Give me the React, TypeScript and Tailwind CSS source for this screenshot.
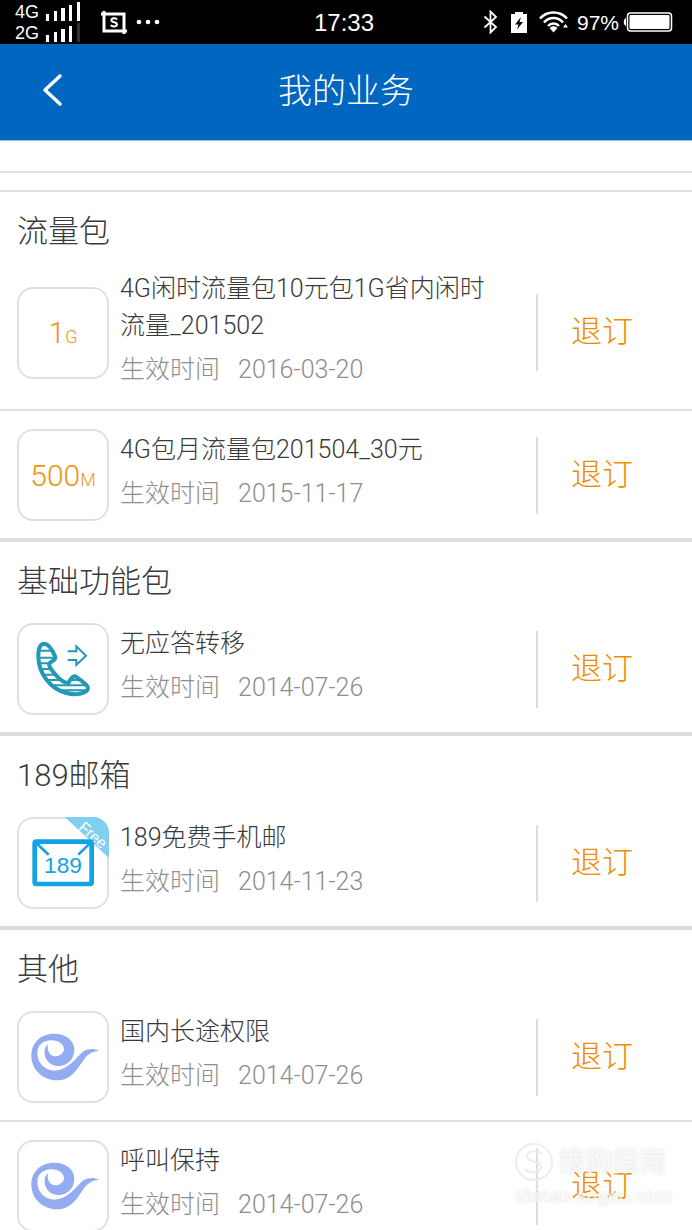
import { ReactNode } from "react";

interface Service {
  name: string;
  date: string;
  icon: ReactNode;
}

interface ServiceGroup {
  title: string;
  services: Service[];
}

// Data allowance drawn as big number + small unit
function Quota({ amount, unit }: { amount: string; unit: string }) {
  return (
    <span className="flex items-baseline text-[#f0930f]">
      <span className="text-[30px]">{amount}</span>
      <span className="text-[18px]">{unit}</span>
    </span>
  );
}

function CallForwardIcon() {
  const outline =
    "M134 101C121 101 115 117 116 142C118 190 150 236 200 249C232 257 263 250 265 235C266 226 247 213 229 200C220 195 212 208 206 219C196 219 186 213 176 203C162 189 149 172 148 163C149 155 170 151 167 141C163 132 153 103 134 101Z";
  return (
    <svg viewBox="52 39 276 276" className="size-full" fill="none" stroke="#2399b5">
      <clipPath id="handset">
        <path d={outline} />
      </clipPath>
      <g clipPath="url(#handset)" strokeWidth="6">
        <path d="M110 122H170M110 143H175M110 160H160M110 177H170M110 194H185M120 210H270M140 226H275M150 241H275" />
      </g>
      <path d={outline} strokeWidth="12" strokeLinejoin="round" />
      <path d="M204 124H230V109L259 137L230 165V150H204" strokeWidth="6" />
    </svg>
  );
}

function MailIcon() {
  return (
    <svg
      viewBox="52 201 276 276"
      className="size-full font-['Liberation_Sans',sans-serif] font-normal"
      fill="none"
    >
      <path d="M195 201H328V324Z" fill="#80cfef" />
      <text transform="translate(234 236) rotate(41)" fill="#ffffff" className="text-[46px]">
        Free
      </text>
      <rect x="105" y="275" width="171" height="127" rx="5" stroke="#11a3e4" strokeWidth="14" />
      <path d="M112 281L147 314M270 281L236 314" stroke="#11a3e4" strokeWidth="8" />
      <text x="190" y="370" textAnchor="middle" fill="#11a3e4" className="text-[68px]">
        189
      </text>
    </svg>
  );
}

function TelecomIcon() {
  return (
    <svg viewBox="52 33 276 276" className="size-full">
      <path
        fill="#92abf1"
        d="M298 152C283 145 266 145 253 153C238 163 228 181 208 195C193 206 177 212 163 212C133 211 113 187 113 160C113 136 130 121 155 121C178 121 193 134 193 148C192 161 180 169 167 169C151 168 141 154 145 133C134 141 132 158 138 173C146 190 160 198 179 198C205 197 224 177 224 148C223 119 197 101 163 101C123 101 95 129 95 166C95 209 128 241 172 241C212 240 230 212 248 185C261 165 275 154 298 152Z"
      />
    </svg>
  );
}

const groups: ServiceGroup[] = [
  {
    title: "流量包",
    services: [
      {
        name: "4G闲时流量包10元包1G省内闲时流量_201502",
        date: "2016-03-20",
        icon: <Quota amount="1" unit="G" />,
      },
      {
        name: "4G包月流量包201504_30元",
        date: "2015-11-17",
        icon: <Quota amount="500" unit="M" />,
      },
    ],
  },
  {
    title: "基础功能包",
    services: [{ name: "无应答转移", date: "2014-07-26", icon: <CallForwardIcon /> }],
  },
  {
    title: "189邮箱",
    services: [{ name: "189免费手机邮", date: "2014-11-23", icon: <MailIcon /> }],
  },
  {
    title: "其他",
    services: [
      { name: "国内长途权限", date: "2014-07-26", icon: <TelecomIcon /> },
      { name: "呼叫保持", date: "2014-07-26", icon: <TelecomIcon /> },
    ],
  },
];

function SignalRow({ label, weakLast }: { label: string; weakLast?: boolean }) {
  return (
    <div className="flex h-[21px] items-center gap-[6px]">
      <span className="w-[25px] pt-[2px] text-[18px] leading-[21px]">{label}</span>
      <svg width="35" height="19" viewBox="0 0 35 19" fill="#ffffff">
        <rect x="0" y="12" width="3" height="7" />
        <rect x="8" y="9" width="3" height="10" />
        <rect x="15" y="6" width="4" height="13" />
        <rect x="23" y="3" width="3" height="16" />
        <rect x="31" y="0" width="3" height="19" fill={weakLast ? "#333333" : "#ffffff"} />
      </svg>
    </div>
  );
}

function StatusBar() {
  return (
    <div className="flex h-11 shrink-0 items-center bg-black px-[15px] font-['Liberation_Sans',sans-serif] font-normal text-white">
      <div className="flex flex-1 items-center">
        <div>
          <SignalRow label="4G" />
          <SignalRow label="2G" weakLast />
        </div>
        <svg className="ml-5" width="64" height="24" viewBox="0 0 64 24" fill="none" stroke="#ffffff">
          <path d="M0 4H23V24M3 1V21H26" strokeWidth="3" />
          <path
            d="M16 9.5C15 7.6 10.4 7.8 10.4 10.2C10.4 13 16 11.6 16 14.3C16 17 10.8 17 10 14.8"
            strokeWidth="2"
          />
          <g fill="#ffffff" stroke="none">
            <circle cx="38" cy="12" r="2.3" />
            <circle cx="47" cy="12" r="2.3" />
            <circle cx="56" cy="12" r="2.3" />
          </g>
        </svg>
      </div>
      <span className="pt-[2px] text-[24px]">17:33</span>
      <div className="flex flex-1 items-center justify-end pr-1">
        <svg width="15" height="24" viewBox="0 0 15 24" fill="none" stroke="#ffffff" strokeWidth="1.8">
          <path d="M1.5 6.5L13 17L7.5 22.5V1.5L13 7L1.5 17.5" />
        </svg>
        <svg className="ml-[13px]" width="16" height="21" viewBox="0 0 16 21">
          <path d="M0 2H4V0H12V2H16V21H0Z" fill="#ffffff" />
          <path d="M10 5L4 12.5H7.5L6 17.5L12 10H8.5Z" fill="#000000" />
        </svg>
        <svg className="ml-3" width="30" height="22" viewBox="0 0 30 22" fill="none" stroke="#ffffff">
          <path d="M1 7.5C8 -0.5 21 -0.5 28 7.5M5 11.5C10 5.5 19 5.5 24 11.5M9 15C12 11.5 17 11.5 20 15" strokeWidth="2.5" />
          <path d="M10.5 17C13 14.8 16 14.8 18.5 17L14.5 21.5Z" fill="#ffffff" stroke="none" />
          <path d="M24 16.5L26.5 13L29 16.5Z" fill="#ffffff" stroke="none" />
        </svg>
        <span className="ml-2 pt-[2px] text-[21px]">97%</span>
        <svg className="ml-1" width="50" height="20" viewBox="0 0 50 20" fill="none">
          <path d="M3 6C0 6.5 0 13.5 3 14Z" fill="#ffffff" />
          <rect x="4.5" y="1" width="44" height="18" rx="3" stroke="#ffffff" strokeWidth="1.5" />
          <rect x="6.5" y="3" width="40" height="14" rx="1" fill="#ffffff" />
        </svg>
      </div>
    </div>
  );
}

function ServiceRow({ service }: { service: Service }) {
  return (
    <li className="flex min-h-[127px] items-center border-t-2 border-[#e0e0e0] pt-[15px] pb-[14px] pl-[17px] first:border-t-0 not-first:min-h-[129px]">
      <div className="flex size-[92px] shrink-0 items-center justify-center overflow-hidden rounded-[16px] ring-2 ring-[#e0e0e0] ring-inset">
        {service.icon}
      </div>
      <div className="ml-[11px] flex-1 pr-8 pb-[7px] text-[25px] leading-[37px]">
        <h3 className="text-[#3a3a3a]">{service.name}</h3>
        <p className="mt-[7px] flex gap-[18px] text-[#8e8e8e]">
          <span>生效时间</span>
          <time>{service.date}</time>
        </p>
      </div>
      <div className="flex h-[77px] w-[156px] shrink-0 items-center border-l-2 border-[#dddddd] pl-[33px]">
        <button type="button" className="text-[31px] text-[#f08c00]">
          退订
        </button>
      </div>
    </li>
  );
}

function Watermark() {
  return (
    <div className="pointer-events-none absolute right-5 bottom-5 flex flex-col text-white/70 [text-shadow:0_0_3px_rgba(0,0,0,0.12)]">
      <div className="flex items-center gap-1">
        <svg width="40" height="40" viewBox="0 0 40 40" fill="none" stroke="#ededed" strokeWidth="2">
          <circle cx="20" cy="20" r="18" />
          <path d="M29 12C24 8 12 8 13 15C14 21 27 18 27 25C27 32 15 31 11 27" />
        </svg>
        <span className="text-[27px] leading-10 font-bold">搜狗指南</span>
      </div>
      <span className="text-[19px] leading-7 font-bold">zhinan.sogou.com</span>
    </div>
  );
}

export default function App() {
  return (
    <div className="relative flex h-screen flex-col overflow-hidden bg-white font-['Roboto','Noto_Sans_CJK_SC',sans-serif] font-light">
      <StatusBar />

      <header className="flex h-24 shrink-0 items-center bg-[#0066c0] px-10 pb-1 text-white">
        <button type="button" aria-label="返回" className="w-10">
          <svg width="24" height="34" viewBox="0 0 24 34" fill="none" stroke="#ffffff">
            <path d="M20 3L5 17L20 31" strokeWidth="3.5" strokeLinecap="round" strokeLinejoin="round" />
          </svg>
        </button>
        <h1 className="flex-1 pt-[2px] pr-10 text-center text-[34px]">我的业务</h1>
      </header>

      <main className="flex-1 overflow-y-auto [scrollbar-width:none]">
        {/* Tail of the scrolled-away group */}
        <div className="h-[33px] border-t border-b-2 border-t-[#8fc3e8] border-b-[#e0e0e0]" />
        <div className="h-[19px] border-b-2 border-[#e0e0e0]" />

        {groups.map((group) => (
          <section key={group.title} className="border-b-4 border-[#dddddd]">
            <h2 className="h-[63px] pt-[18px] pl-[17px] text-[31px] leading-[44px] text-[#3a3a3a]">
              {group.title}
            </h2>
            <ul>
              {group.services.map((service) => (
                <ServiceRow key={service.name} service={service} />
              ))}
            </ul>
          </section>
        ))}
      </main>

      <Watermark />
    </div>
  );
}
